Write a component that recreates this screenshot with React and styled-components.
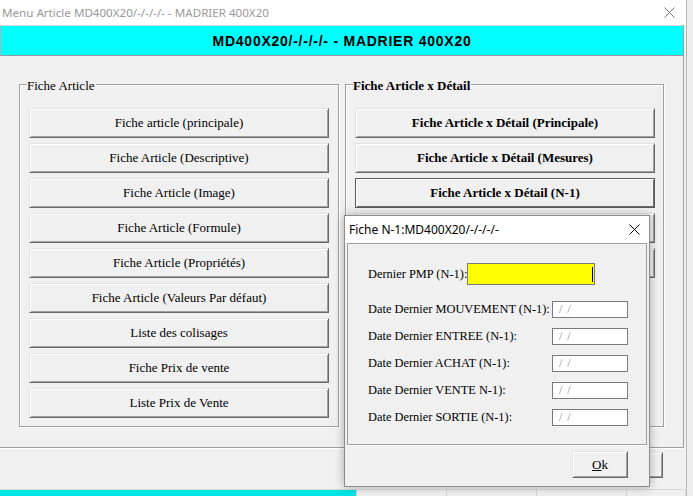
import React from 'react';
import styled, { createGlobalStyle } from 'styled-components';

const GlobalStyle = createGlobalStyle`
  html, body {
    margin: 0;
    padding: 0;
    background: #ececec;
  }
  body {
    font-family: "Liberation Serif", "Times New Roman", serif;
    font-size: 13px;
    color: #000;
  }
  * { box-sizing: border-box; }
`;

const Screen = styled.div`
  position: relative;
  width: 693px;
  height: 496px;
  overflow: hidden;
  display: flex;
  align-items: flex-start;
  background: #e9e9e9;
`;

const Window = styled.div`
  width: 687px;
  height: 520px;
  flex: none;
  display: flex;
  flex-direction: column;
  background: #f0f0f0;
  border-right: 1px solid #b9b9b9;
  & > * { flex: none; }
`;

const TitleBar = styled.div`
  height: ${p => p.$h}px;
  flex: none;
  display: flex;
  align-items: center;
  justify-content: space-between;
  background: #fff;
  padding: 0 ${p => p.$pr}px 0 ${p => p.$pl}px;
  font-family: "Noto Sans", "Open Sans", sans-serif;
  font-size: ${p => p.$fs || 12}px;
  color: ${p => (p.$active ? '#000' : '#999')};
  white-space: nowrap;
`;

const CloseIcon = styled.svg`
  width: 11px;
  height: 11px;
  flex: none;
`;

const MainPanel = styled.div`
  width: 684px;
  display: flex;
  flex-direction: column;
  border-right: 1px solid #a0a0a0;
  border-bottom: 1px solid #a0a0a0;
  box-shadow: 0 1px 0 #fff;
`;

const Banner = styled.div`
  height: 31px;
  display: flex;
  align-items: center;
  justify-content: center;
  background: #00ffff;
  border-top: 1px solid #d9d9d9;
  border-bottom: 1px solid #9a9a9a;
  border-left: 1px solid #b0b0b0;
  font-family: "Liberation Sans", Arial, sans-serif;
  font-weight: bold;
  font-size: 14px;
  letter-spacing: 0.75px;
`;

const GroupsRow = styled.div`
  display: flex;
  align-items: stretch;
  gap: 6px;
  padding: 28px 0 20px 19px;
`;

const GroupBox = styled.div`
  width: ${p => p.$w}px;
  padding: 0 9px 8px;
  border: 1px solid #a0a0a0;
  box-shadow: inset 1px 1px 0 #fff, 1px 1px 0 #fff;
  display: flex;
  flex-direction: column;
`;

const GroupTitle = styled.span`
  display: block;
  align-self: flex-start;
  margin: -7px 0 0 -2px;
  padding: 0 1px 0 0;
  line-height: 15px;
  font-size: 13px;
  font-weight: ${p => (p.$bold ? 'bold' : 'normal')};
  background: #f0f0f0;
`;

const ButtonList = styled.div`
  display: flex;
  flex-direction: column;
  gap: 5px;
  margin-top: 15px;
`;

const WinButton = styled.button`
  width: ${p => p.$w || 300}px;
  height: ${p => p.$h || 30}px;
  padding: 0;
  background: #f0f0f0;
  font-family: "Liberation Serif", "Times New Roman", serif;
  font-size: 13px;
  font-weight: ${p => (p.$bold ? 'bold' : 'normal')};
  color: #000;
  border: 1px solid;
  border-color: ${p => (p.$focused ? '#5a5a5a' : '#e3e3e3 #696969 #696969 #e3e3e3')};
  box-shadow: ${p =>
    p.$focused
      ? 'inset 1px 1px 0 #fff, inset -1px -1px 0 #696969'
      : 'inset 1px 1px 0 #fff, inset -1px -1px 0 #a0a0a0'};
  cursor: default;
`;

const BottomBar = styled.div`
  height: 41px;
  display: flex;
  justify-content: flex-end;
  padding: 4px 23px 0 0;
`;

const StatusBar = styled.div`
  height: 20px;
  display: flex;
  border-top: 1px solid #d8d8d8;
`;

const StatusPanel = styled.div`
  width: ${p => p.$w}px;
  flex: ${p => (p.$w ? 'none' : '1')};
  background: ${p => (p.$cyan ? '#00e5e5' : '#f0f0f0')};
  border-right: 1px solid #d6d6d6;
`;

const SideStrip = styled.div`
  flex: 1;
  align-self: stretch;
  background: #eeeeee;
`;

/* popup dialog */
const Dialog = styled.div`
  position: absolute;
  left: 344px;
  top: 215px;
  width: 306px;
  height: 272px;
  display: flex;
  flex-direction: column;
  background: #f0f0f0;
  border: 1px solid #8c8c8c;
  box-shadow: 0 0 9px rgba(0, 0, 0, 0.3);
`;

const DialogBody = styled.div`
  padding: 0 2px;
`;

const Frame = styled.div`
  height: 202px;
  border: 1px solid #a0a0a0;
  box-shadow: 0 1px 0 #fff;
  padding: 19px 0 0 20px;
  display: flex;
  flex-direction: column;
`;

const FieldRow = styled.div`
  display: flex;
  align-items: center;
  height: ${p => p.$h}px;
  margin-bottom: ${p => p.$mb}px;
  white-space: nowrap;
`;

const FieldLabel = styled.span`
  width: ${p => (p.$w ? `${p.$w}px` : 'auto')};
  flex: none;
  font-size: 12.4px;
`;

const YellowInput = styled.div`
  width: 128px;
  height: 22px;
  background: #ffff00;
  border: 1px solid #7a7a7a;
  display: flex;
  align-items: center;
  justify-content: flex-end;
  padding-right: 1px;
`;

const Caret = styled.span`
  width: 1px;
  height: 15px;
  background: #000;
`;

const DateInput = styled.div`
  width: 76px;
  height: 17px;
  background: #fff;
  border: 1px solid #7a7a7a;
  display: flex;
  align-items: center;
  padding-left: 6px;
  font-size: 12px;
  color: #8a8a8a;
  letter-spacing: 1px;
`;

const DialogFooter = styled.div`
  display: flex;
  justify-content: flex-end;
  padding: 6px 21px 0 0;
`;

const Mnemonic = styled.span`
  text-decoration: underline;
`;

function Close({ color }) {
  return (
    <CloseIcon viewBox="0 0 11 11">
      <path d="M0.5 0.5 L10.5 10.5 M10.5 0.5 L0.5 10.5" stroke={color} strokeWidth="1" fill="none" />
    </CloseIcon>
  );
}

const leftButtons = [
  'Fiche article (principale)',
  'Fiche Article (Descriptive)',
  'Fiche Article (Image)',
  'Fiche Article (Formule)',
  'Fiche Article (Propriétés)',
  'Fiche Article (Valeurs Par défaut)',
  'Liste des colisages',
  'Fiche Prix de vente',
  'Liste Prix de Vente',
];

const rightButtons = [
  'Fiche Article x Détail (Principale)',
  'Fiche Article x Détail (Mesures)',
  'Fiche Article x Détail (N-1)',
  'Fiche Article x Détail (Stock)',
  'Fiche Article x Détail (Prix)',
];

const dateFields = [
  'Date Dernier MOUVEMENT (N-1):',
  'Date Dernier ENTREE (N-1):',
  'Date Dernier ACHAT (N-1):',
  'Date Dernier VENTE N-1):',
  'Date Dernier SORTIE (N-1):',
];

export default function App() {
  return (
    <>
      <GlobalStyle />
      <Screen>
        <Window>
          <TitleBar $h={25} $pl={2} $pr={11} $fs={11.6}>
            <span>Menu Article MD400X20/-/-/-/- - MADRIER 400X20</span>
            <Close color="#777" />
          </TitleBar>
          <MainPanel>
            <Banner>MD400X20/-/-/-/- - MADRIER 400X20</Banner>
            <GroupsRow>
              <GroupBox $w={320}>
                <GroupTitle>Fiche Article</GroupTitle>
                <ButtonList>
                  {leftButtons.map(label => (
                    <WinButton key={label}>{label}</WinButton>
                  ))}
                </ButtonList>
              </GroupBox>
              <GroupBox $w={319}>
                <GroupTitle $bold>Fiche Article x Détail</GroupTitle>
                <ButtonList>
                  {rightButtons.map((label, i) => (
                    <WinButton key={label} $bold $focused={i === 2}>
                      {label}
                    </WinButton>
                  ))}
                </ButtonList>
              </GroupBox>
            </GroupsRow>
          </MainPanel>
          <BottomBar>
            <WinButton $w={72} $h={26}>Fermer</WinButton>
          </BottomBar>
          <StatusBar>
            <StatusPanel $w={357} $cyan />
            <StatusPanel $w={90} />
            <StatusPanel $w={90} />
            <StatusPanel $w={90} />
            <StatusPanel />
          </StatusBar>
        </Window>
        <SideStrip />

        <Dialog>
          <TitleBar $h={27} $pl={4} $pr={9} $active>
            <span>Fiche N-1:MD400X20/-/-/-/-</span>
            <Close color="#000" />
          </TitleBar>
          <DialogBody>
            <Frame>
              <FieldRow $h={22} $mb={16}>
                <FieldLabel>Dernier PMP (N-1):</FieldLabel>
                <YellowInput>
                  <Caret />
                </YellowInput>
              </FieldRow>
              {dateFields.map(label => (
                <FieldRow key={label} $h={17} $mb={10}>
                  <FieldLabel $w={184}>{label}</FieldLabel>
                  <DateInput>/ /</DateInput>
                </FieldRow>
              ))}
            </Frame>
          </DialogBody>
          <DialogFooter>
            <WinButton $w={56} $h={27}>
              <Mnemonic>O</Mnemonic>k
            </WinButton>
          </DialogFooter>
        </Dialog>
      </Screen>
    </>
  );
}
